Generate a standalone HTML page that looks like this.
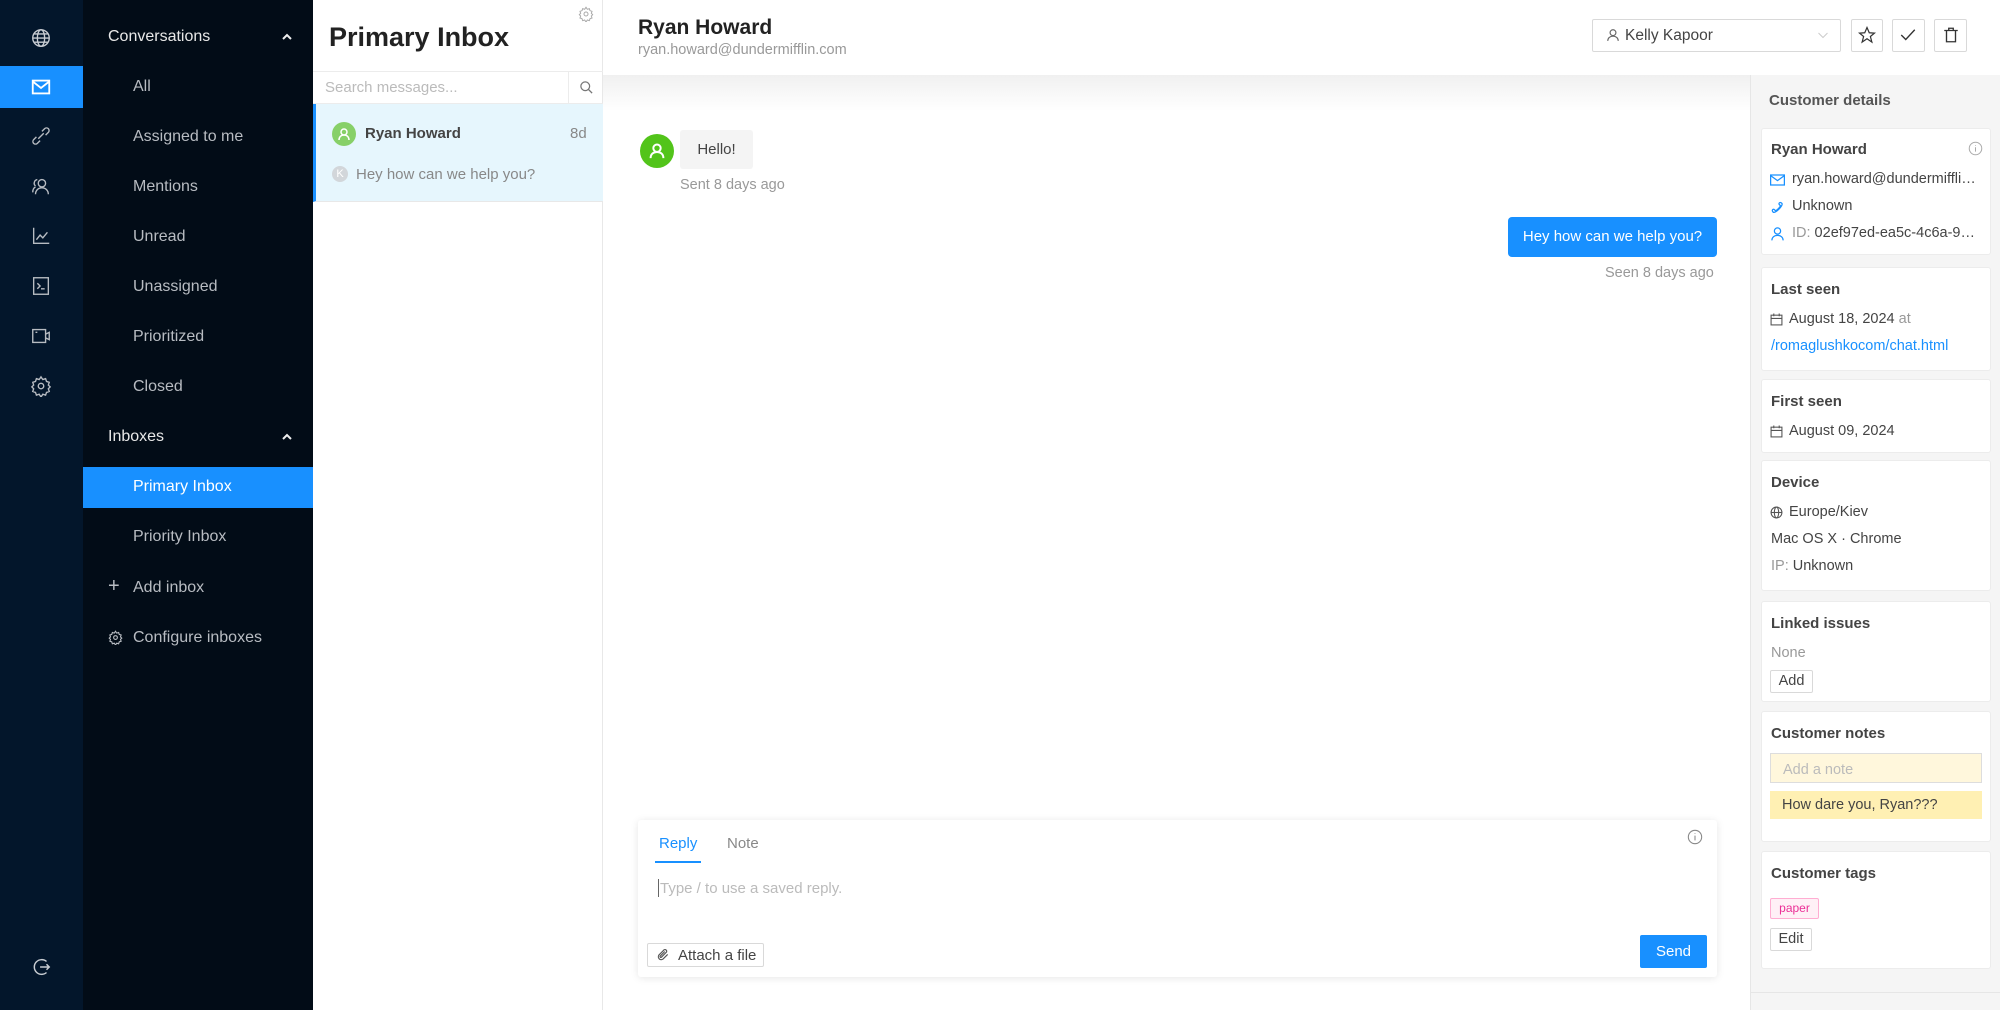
<!DOCTYPE html>
<html><head><meta charset="utf-8"><style>
*{box-sizing:border-box;margin:0;padding:0}
body{width:2000px;height:1010px;overflow:hidden;font-family:"Liberation Sans",sans-serif;background:#fff;position:relative;color:#333}
.a{position:absolute}
.rail{left:0;top:0;width:83px;height:1010px;background:#03162b}
.nav{left:83px;top:0;width:230px;height:1010px;background:#020c17}
.ni{position:absolute;left:50px;font-size:16px;color:#b8bcc2;line-height:20px}
.nh{position:absolute;left:25px;font-size:16px;color:#e8e8e8}
.ic{position:absolute;left:30px}
svg{display:block}
.list{left:313px;top:0;width:290px;height:1010px;background:#fff;border-right:1px solid #e8e8e8}
.main{left:603px;top:0;width:1397px;height:1010px;background:#fff}
.right{left:1750px;top:75px;width:250px;height:935px;background:#f5f5f5;border-left:1px solid #e6e6e6}
.card{position:absolute;left:10px;width:230px;background:#fff;border:1px solid #ececec;border-radius:3px;padding:0 9px}
.ct{font-size:15px;font-weight:bold;color:#444;position:absolute;left:9px}
.cl{font-size:14.5px;color:#444;position:absolute;left:9px;white-space:nowrap}
.btn{position:absolute;border:1px solid #d9d9d9;border-radius:2px;background:#fff}
</style></head><body>
<div class="a rail">
  <div class="ic" style="top:27px"><svg width="22" height="22" viewBox="0 0 24 24" fill="none" stroke="#c8ccd2" stroke-width="1.5"><circle cx="12" cy="12" r="9"/><ellipse cx="12" cy="12" rx="4" ry="9"/><path d="M3 12h18M4.5 7.5h15M4.5 16.5h15"/></svg></div>
  <div class="a" style="left:0;top:66px;width:83px;height:42px;background:#1890ff"></div>
  <div class="ic" style="top:76px"><svg width="22" height="22" viewBox="0 0 24 24" fill="none" stroke="#fff" stroke-width="2"><rect x="3" y="5" width="18" height="14"/><path d="M3 6l9 7 9-7"/></svg></div>
  <div class="ic" style="top:125px"><svg width="22" height="22" viewBox="0 0 24 24" fill="none" stroke="#b8bcc2" stroke-width="1.5"><path d="M9 15l6-6M7 13l-3 3a2.5 2.5 0 0 0 4 4l3-3M17 11l3-3a2.5 2.5 0 0 0-4-4l-3 3"/></svg></div>
  <div class="ic" style="top:175px"><svg width="22" height="22" viewBox="0 0 24 24" fill="none" stroke="#b8bcc2" stroke-width="1.5"><circle cx="13" cy="9" r="4"/><path d="M6 21c0-4 3-7 7-7s7 3 7 7M8 5a4 4 0 0 0-2 7M3 19c0-3 1-5 3-6"/></svg></div>
  <div class="ic" style="top:225px"><svg width="22" height="22" viewBox="0 0 24 24" fill="none" stroke="#b8bcc2" stroke-width="1.5"><path d="M4 3v17h17M7 16l4-5 3 3 5-6"/></svg></div>
  <div class="ic" style="top:275px"><svg width="22" height="22" viewBox="0 0 24 24" fill="none" stroke="#b8bcc2" stroke-width="1.5"><rect x="4" y="3" width="16" height="18"/><path d="M8 9l3 3-3 3M12 15h4"/></svg></div>
  <div class="ic" style="top:325px"><svg width="22" height="22" viewBox="0 0 24 24" fill="none" stroke="#b8bcc2" stroke-width="1.5"><rect x="3" y="5" width="14" height="14"/><path d="M17 10l4-2v8l-4-2M6 8h2"/></svg></div>
  <div class="ic" style="top:375px"><svg width="22" height="22" viewBox="0 0 24 24" fill="none" stroke="#b8bcc2" stroke-width="1.5"><circle cx="12" cy="12" r="3"/><path d="M12 2l2 3 3-1 1 3 3 1-1 3 2 2-2 2 1 3-3 1-1 3-3-1-2 3-2-3-3 1-1-3-3-1 1-3-2-2 2-2-1-3 3-1 1-3 3 1z"/></svg></div>
  <div class="ic" style="top:956px"><svg width="22" height="22" viewBox="0 0 24 24" fill="none" stroke="#c8ccd2" stroke-width="1.6"><path d="M18 6a8 8 0 1 0 0 12M11 12h10M18 9l3 3-3 3"/></svg></div>
</div>
<div class="a nav">
  <div class="nh" style="top:28px">Conversations</div>
  <div class="a" style="left:199px;top:33px"><svg width="10" height="8" viewBox="0 0 10 8" fill="none" stroke="#eee" stroke-width="2"><path d="M1 6l4-4 4 4"/></svg></div>
  <div class="ni" style="top:77px">All</div>
  <div class="ni" style="top:127px">Assigned to me</div>
  <div class="ni" style="top:177px">Mentions</div>
  <div class="ni" style="top:227px">Unread</div>
  <div class="ni" style="top:277px">Unassigned</div>
  <div class="ni" style="top:327px">Prioritized</div>
  <div class="ni" style="top:377px">Closed</div>
  <div class="nh" style="top:428px">Inboxes</div>
  <div class="a" style="left:199px;top:433px"><svg width="10" height="8" viewBox="0 0 10 8" fill="none" stroke="#eee" stroke-width="2"><path d="M1 6l4-4 4 4"/></svg></div>
  <div class="a" style="left:0;top:467px;width:230px;height:41px;background:#1890ff"></div>
  <div class="ni" style="top:477px;color:#fff">Primary Inbox</div>
  <div class="ni" style="top:527px">Priority Inbox</div>
  <div class="a" style="left:25px;top:575px;color:#b8bcc2;font-size:20px">+</div>
  <div class="ni" style="top:578px">Add inbox</div>
  <div class="a" style="left:25px;top:630px"><svg width="15" height="15" viewBox="0 0 24 24" fill="none" stroke="#b8bcc2" stroke-width="1.8"><circle cx="12" cy="12" r="3"/><path d="M12 2l2 3 3-1 1 3 3 1-1 3 2 2-2 2 1 3-3 1-1 3-3-1-2 3-2-3-3 1-1-3-3-1 1-3-2-2 2-2-1-3 3-1 1-3 3 1z"/></svg></div>
  <div class="ni" style="top:628px">Configure inboxes</div>
</div>
<div class="a list">
  <div class="a" style="left:265px;top:6px"><svg width="16" height="16" viewBox="0 0 24 24" fill="none" stroke="#aaa" stroke-width="1.5"><circle cx="12" cy="12" r="3"/><path d="M12 2l2 3 3-1 1 3 3 1-1 3 2 2-2 2 1 3-3 1-1 3-3-1-2 3-2-3-3 1-1-3-3-1 1-3-2-2 2-2-1-3 3-1 1-3 3 1z"/></svg></div>
  <div class="a" style="left:16px;top:22px;font-size:27px;font-weight:bold;color:#222">Primary Inbox</div>
  <div class="a" style="left:0;top:71px;width:290px;height:33px;border-top:1px solid #ececec;border-bottom:1px solid #ececec"></div>
  <div class="a" style="left:12px;top:79px;font-size:15px;color:#bbb">Search messages...</div>
  <div class="a" style="left:255px;top:71px;width:1px;height:33px;background:#ececec"></div>
  <div class="a" style="left:266px;top:80px"><svg width="15" height="15" viewBox="0 0 24 24" fill="none" stroke="#777" stroke-width="2"><circle cx="10" cy="10" r="7"/><path d="M15 15l6 6"/></svg></div>
  <div class="a" style="left:0;top:104px;width:290px;height:98px;background:#e6f6fd;border-left:3px solid #1890ff;border-bottom:1px solid #e8e8e8"></div>
  <div class="a" style="left:19px;top:122px;width:24px;height:24px;border-radius:50%;background:#87d068"><svg width="24" height="24" viewBox="0 0 24 24" fill="none" stroke="#fff" stroke-width="1.5"><circle cx="12" cy="10" r="3"/><path d="M7 18c0-3 2-5 5-5s5 2 5 5"/></svg></div>
  <div class="a" style="left:52px;top:125px;font-size:15px;font-weight:bold;color:#444">Ryan Howard</div>
  <div class="a" style="left:257px;top:125px;font-size:15px;color:#888">8d</div>
  <div class="a" style="left:19px;top:166px;width:16px;height:16px;border-radius:50%;background:#d2d6da;color:#fff;font-size:11px;text-align:center;line-height:16px">K</div>
  <div class="a" style="left:43px;top:166px;font-size:15px;color:#888">Hey how can we help you?</div>
</div>
<div class="a main">
  <div class="a" style="left:0;top:75px;width:1147px;height:36px;background:linear-gradient(#f0f0f0,#fff)"></div>
  <div class="a" style="left:35px;top:16px;font-size:21px;font-weight:bold;color:#222">Ryan Howard</div>
  <div class="a" style="left:35px;top:42px;font-size:14.5px;color:#999">ryan.howard@dundermifflin.com</div>
  <div class="btn" style="left:989px;top:19px;width:249px;height:33px"></div>
  <div class="a" style="left:1003px;top:28px"><svg width="14" height="14" viewBox="0 0 24 24" fill="none" stroke="#666" stroke-width="2"><circle cx="12" cy="8" r="5"/><path d="M3 22c0-5 4-8 9-8s9 3 9 8"/></svg></div>
  <div class="a" style="left:1022px;top:27px;font-size:15.5px;color:#444">Kelly Kapoor</div>
  <div class="a" style="left:1214px;top:29px"><svg width="12" height="12" viewBox="0 0 24 24" fill="none" stroke="#ccc" stroke-width="2"><path d="M3 8l9 9 9-9"/></svg></div>
  <div class="btn" style="left:1248px;top:19px;width:32px;height:33px"></div>
  <div class="a" style="left:1255px;top:26px"><svg width="18" height="18" viewBox="0 0 24 24" fill="none" stroke="#333" stroke-width="1.6"><path d="M12 2l3 7 7 .5-5.5 4.5 2 7.5L12 17l-6.5 4.5 2-7.5L2 9.5 9 9z"/></svg></div>
  <div class="btn" style="left:1289px;top:19px;width:33px;height:33px"></div>
  <div class="a" style="left:1296px;top:26px"><svg width="18" height="18" viewBox="0 0 24 24" fill="none" stroke="#333" stroke-width="1.8"><path d="M3 12l6 6L21 5"/></svg></div>
  <div class="btn" style="left:1331px;top:19px;width:33px;height:33px"></div>
  <div class="a" style="left:1339px;top:26px"><svg width="18" height="18" viewBox="0 0 24 24" fill="none" stroke="#333" stroke-width="1.8"><path d="M3 6h18M9 6V3h6v3M6 6v15h12V6"/></svg></div>
  <div class="a" style="left:37px;top:134px;width:34px;height:34px;border-radius:50%;background:#52c41a"><svg width="34" height="34" viewBox="0 0 24 24" fill="none" stroke="#fff" stroke-width="1.4"><circle cx="12" cy="10" r="2.6"/><path d="M7.5 17c0-2.8 2-4.3 4.5-4.3s4.5 1.5 4.5 4.3"/></svg></div>
  <div class="a" style="left:77px;top:130px;width:73px;height:39px;background:#f4f4f4;border-radius:3px;font-size:15px;color:#444;text-align:center;line-height:39px">Hello!</div>
  <div class="a" style="left:77px;top:177px;font-size:14.5px;color:#999">Sent 8 days ago</div>
  <div class="a" style="left:905px;top:217px;width:209px;height:40px;background:#1890ff;border-radius:4px;font-size:15px;color:#fff;text-align:center;line-height:40px">Hey how can we help you?</div>
  <div class="a" style="left:1002px;top:265px;font-size:14.5px;color:#999">Seen 8 days ago</div>
  <div class="a" style="left:35px;top:820px;width:1079px;height:157px;background:#fff;border-radius:3px;box-shadow:0 1px 8px rgba(0,0,0,.1)"></div>
  <div class="a" style="left:56px;top:835px;font-size:15px;color:#1890ff">Reply</div>
  <div class="a" style="left:52px;top:861px;width:46px;height:2px;background:#1890ff"></div>
  <div class="a" style="left:124px;top:835px;font-size:15px;color:#888">Note</div>
  <div class="a" style="left:1084px;top:829px"><svg width="16" height="16" viewBox="0 0 24 24" fill="none" stroke="#888" stroke-width="1.6"><circle cx="12" cy="12" r="10"/><path d="M12 10v7M12 6.5v1"/></svg></div>
  <div class="a" style="left:55px;top:879px;width:1px;height:18px;background:#666"></div>
  <div class="a" style="left:57px;top:880px;font-size:15px;color:#bbb">Type / to use a saved reply.</div>
  <div class="btn" style="left:44px;top:943px;width:117px;height:24px"></div>
  <div class="a" style="left:53px;top:948px"><svg width="14" height="14" viewBox="0 0 24 24" fill="none" stroke="#555" stroke-width="2"><path d="M20 11l-8 8a5 5 0 0 1-7-7l9-9a3 3 0 0 1 4 4l-9 9a1.5 1.5 0 0 1-2-2l8-8"/></svg></div>
  <div class="a" style="left:75px;top:947px;font-size:15px;color:#444">Attach a file</div>
  <div class="a" style="left:1037px;top:935px;width:67px;height:33px;background:#1890ff;border-radius:2px;color:#fff;font-size:15px;text-align:center;line-height:33px">Send</div>
</div>
<div class="a right">
  <div class="a" style="left:18px;top:17px;font-size:15px;font-weight:bold;color:#555">Customer details</div>
  <div class="card" style="top:53px;height:127px">
    <div class="ct" style="top:12px">Ryan Howard</div>
    <div class="a" style="left:206px;top:12px"><svg width="15" height="15" viewBox="0 0 24 24" fill="none" stroke="#aaa" stroke-width="1.6"><circle cx="12" cy="12" r="10"/><path d="M12 10v7M12 6.5v1"/></svg></div>
    <div class="a" style="left:8px;top:44px"><svg width="15" height="14" viewBox="0 0 24 20" fill="none" stroke="#1890ff" stroke-width="2"><rect x="1" y="2" width="22" height="16"/><path d="M1 3l11 8 11-8"/></svg></div>
    <div class="cl" style="left:30px;top:42px">ryan.howard@dundermiffli…</div>
    <div class="a" style="left:8px;top:70px"><svg width="15" height="15" viewBox="0 0 24 24" fill="none" stroke="#1890ff" stroke-width="2"><path d="M5 21c-3-3 0-6 2-4l2 2c3-2 6-5 8-8l-2-2c-2-2 1-5 4-2 3 3-11 17-14 14z"/></svg></div>
    <div class="cl" style="left:30px;top:69px">Unknown</div>
    <div class="a" style="left:8px;top:97px"><svg width="15" height="15" viewBox="0 0 24 24" fill="none" stroke="#1890ff" stroke-width="2"><circle cx="12" cy="8" r="5"/><path d="M3 23c0-5 4-8 9-8s9 3 9 8"/></svg></div>
    <div class="cl" style="left:30px;top:96px"><span style="color:#999">ID:</span> 02ef97ed-ea5c-4c6a-9…</div>
  </div>
  <div class="card" style="top:192px;height:104px">
    <div class="ct" style="top:13px">Last seen</div>
    <div class="a" style="left:8px;top:45px"><svg width="13" height="13" viewBox="0 0 24 24" fill="none" stroke="#555" stroke-width="2"><rect x="2" y="4" width="20" height="18"/><path d="M2 10h20M7 1v5M17 1v5"/></svg></div>
    <div class="cl" style="left:27px;top:43px">August 18, 2024 <span style="color:#999">at</span></div>
    <div class="cl" style="top:70px;color:#1890ff">/romaglushkocom/chat.html</div>
  </div>
  <div class="card" style="top:304px;height:74px">
    <div class="ct" style="top:13px">First seen</div>
    <div class="a" style="left:8px;top:45px"><svg width="13" height="13" viewBox="0 0 24 24" fill="none" stroke="#555" stroke-width="2"><rect x="2" y="4" width="20" height="18"/><path d="M2 10h20M7 1v5M17 1v5"/></svg></div>
    <div class="cl" style="left:27px;top:43px">August 09, 2024</div>
  </div>
  <div class="card" style="top:385px;height:131px">
    <div class="ct" style="top:13px">Device</div>
    <div class="a" style="left:8px;top:45px"><svg width="13" height="13" viewBox="0 0 24 24" fill="none" stroke="#555" stroke-width="2"><circle cx="12" cy="12" r="10"/><ellipse cx="12" cy="12" rx="4" ry="10"/><path d="M2 12h20"/></svg></div>
    <div class="cl" style="left:27px;top:43px">Europe/Kiev</div>
    <div class="cl" style="top:70px">Mac OS X · Chrome</div>
    <div class="cl" style="top:97px"><span style="color:#999">IP:</span> Unknown</div>
  </div>
  <div class="card" style="top:526px;height:101px">
    <div class="ct" style="top:13px">Linked issues</div>
    <div class="cl" style="top:43px;color:#999">None</div>
    <div class="btn" style="left:8px;top:68px;width:43px;height:23px;font-size:14.5px;color:#444;text-align:center;line-height:21px">Add</div>
  </div>
  <div class="card" style="top:636px;height:131px">
    <div class="ct" style="top:13px">Customer notes</div>
    <div class="a" style="left:8px;top:41px;width:212px;height:30px;background:#fff7dc;border:1px solid #ddd;font-size:14.5px;color:#bbb;padding:8px 12px 0">Add a note</div>
    <div class="a" style="left:8px;top:79px;width:212px;height:28px;background:#fff0b3;font-size:14.5px;color:#444;padding:6px 12px 0">How dare you, Ryan???</div>
  </div>
  <div class="card" style="top:776px;height:118px">
    <div class="ct" style="top:13px">Customer tags</div>
    <div class="a" style="left:8px;top:46px;width:49px;height:21px;background:#fff0f6;border:1px solid #ffadd2;border-radius:2px;color:#eb2f96;font-size:12px;text-align:center;line-height:19px">paper</div>
    <div class="btn" style="left:8px;top:76px;width:42px;height:23px;font-size:14.5px;color:#444;text-align:center;line-height:21px">Edit</div>
  </div>
  <div class="a" style="left:0;top:917px;width:250px;height:1px;background:#e6e6e6"></div>
</div>
</body></html>
